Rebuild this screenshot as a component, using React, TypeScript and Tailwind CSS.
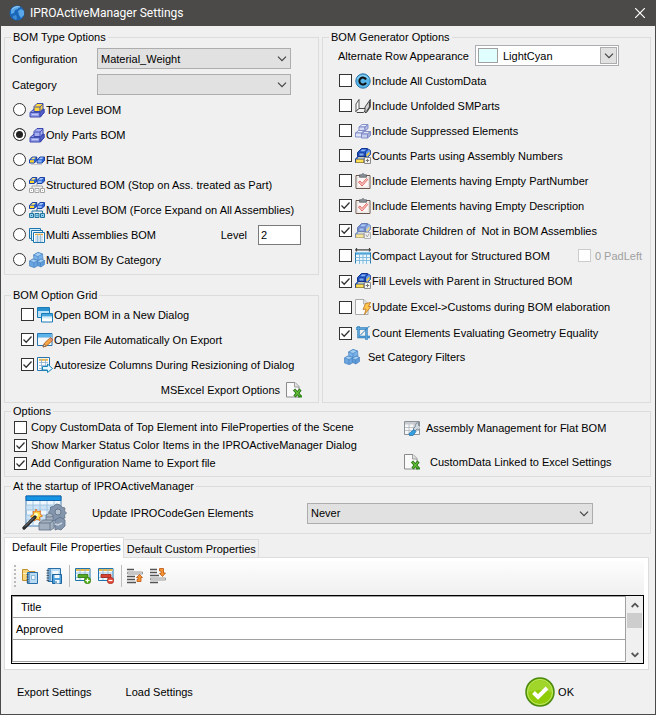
import React, { useState } from 'react';

interface IconProps {
  className?: string;
}

const Svg: React.FC<{ children: React.ReactNode; className?: string }> = ({ children, className = 'size-4' }) => (
  <svg viewBox="0 0 16 16" className={`shrink-0 ${className}`} aria-hidden="true">
    {children}
  </svg>
);

const Block: React.FC<{ x: number; y: number; w?: number; h?: number; top: string; front: string; side: string; line: string }> = ({
  x, y, w = 6, h = 3, top, front, side, line,
}) => (
  <g stroke={line} strokeWidth="0.9" strokeLinejoin="round">
    <path d={`M${x} ${y}l3 -2.5h${w}l-3 2.5z`} fill={top} />
    <path d={`M${x} ${y}h${w}v${h}h-${w}z`} fill={front} />
    <path d={`M${x + w} ${y}l3 -2.5v${h}l-3 2.5z`} fill={side} />
  </g>
);

const PartsIcon: React.FC<{ cap: string }> = ({ cap }) => (
  <Svg>
    <path d="M1 10.500L5 7h10v3.500L11.500 15H1z" fill="#8f9be6" stroke="#3c48ae" strokeLinejoin="round" />
    <path d="M1.500 10.500h9.500v4" fill="none" stroke="#4350b4" />
    <path d="M11 10.500l4-3.500v4l-4 4z" fill="#5262c8" stroke="#3c48ae" strokeLinejoin="round" />
    <path d="M5 4.500L8 1.500h6v5L11.500 9.500H5z" fill={cap} stroke="#3c48ae" strokeLinejoin="round" />
    <path d="M5.500 5h5.500v4M11 5l3-3" fill="none" stroke="#3c48ae" strokeWidth="0.9" />
    <path d="M3 12.500h6" stroke="#c4caf7" strokeWidth="1.200" />
  </Svg>
);

/* Two flat wedges side by side, yellow then blue */
const FlatPair: React.FC<{ y: number }> = ({ y }) => (
  <g strokeLinejoin="round" stroke="#12379c" strokeWidth=".9">
    <path d={`M.5 ${y + 6}v-3l2.700-3h4.600v3.500l-2.500 2.500z`} fill="#2c62d0" />
    <path d={`M1 ${y + 5.500}v-2.300h4v2.300z`} fill="#ffd52e" stroke="none" />
    <path d={`M2 ${y + 2.300}l1.700-1.800h3l-1.500 1.800z`} fill="#ffe978" stroke="none" />
    <path d={`M8.200 ${y + 6}v-3l2.700-3h4.600v3.500l-2.500 2.500z`} fill="#2c62d0" />
    <path d={`M8.700 ${y + 5.500}v-2.300h4v2.300z`} fill="#8bb2f5" stroke="none" />
    <path d={`M9.700 ${y + 2.300}l1.700-1.800h3l-1.500 1.800z`} fill="#a9c8fb" stroke="none" />
  </g>
);

const FlatIcon = () => (
  <Svg>
    <FlatPair y={5} />
    <path d="M2 12.500h11" stroke="#c9c9c9" />
  </Svg>
);

const TreeIcon: React.FC<{ line: string; fill: string }> = ({ line, fill }) => (
  <Svg>
    <FlatPair y={0.5} />
    <path d="M8 7v2M3 11v-2h10.500v2" fill="none" stroke={line} />
    <path d="M.5 11.500h4v4h-4zM6 11.500h4v4h-4zM11.500 11.500h4v4h-4z" fill={fill} stroke={line} />
    <path d="M2.500 13v1M8 13v1M13.500 13v1" stroke={line} />
  </Svg>
);

const SheetsIcon = () => (
  <Svg>
    <path d="M.5 1.500h11v10h-11z" fill="#d7ecf9" stroke="#1d76ad" />
    <path d="M2.500 3.500h11v10h-11z" fill="#e8f4fb" stroke="#1d76ad" />
    <path d="M4.500 5.500h11v10h-11z" fill="#fff" stroke="#1d76ad" />
    <path d="M6 7.500h8" stroke="#e4a83e" strokeWidth="1.500" />
    <path d="M6 10h8M6 12h8M6 14h8M8.500 7v8M11.500 7v8" stroke="#8db5d6" strokeWidth=".8" />
  </Svg>
);

const CubesIcon = () => (
  <Svg>
    <g stroke="#4a84c0" strokeWidth=".7" strokeLinejoin="round">
      <path d="M4.500 3L9 .5l4.500 1.500.5 5L10 9.500 5 8z" fill="#79b3e9" />
      <path d="M.5 9L4 7l5 1.500v5L5.500 15.700.5 14z" fill="#6aa5e0" />
      <path d="M8 9.500L12 7l3.500 1.500v4L12 15l-3.500-1.500z" fill="#5e9bd9" />
      <path d="M4.500 3L9 4.500 13.500 2 9 .5zM.5 9l4.500 1.500L9 8.500 4 7zM8 9.500l3.500 1.200 4-2.200L12 7z" fill="#a5d0f5" />
      <path d="M9 4.500V8.500M5 10.500v5M11.500 10.700V15" fill="none" />
    </g>
  </Svg>
);

const WindowsIcon = () => (
  <Svg>
    <path d="M.5.500h12v10h-12z" fill="#b9e0f7" stroke="#1a7ab5" />
    <path d="M1 1h11v3H1z" fill="#2b91cf" />
    <path d="M4.500 6.500h11v8.500h-11z" fill="#fff" stroke="#1a7ab5" />
    <path d="M5 7h10v2.500H5z" fill="#45a5dc" />
    <path d="M5 10h10v1.500H5z" fill="#d5ecf8" />
  </Svg>
);

const EditWindowIcon = () => (
  <Svg>
    <path d="M.5 1.500h14.500v12H.5z" fill="#f4f8fb" stroke="#2774b0" />
    <path d="M1 2h13.500v3H1z" fill="#5db4ea" />
    <path d="M1 5.500h13.500" stroke="#a6cde6" />
    <path d="M6 15l1.500-4L13.500 5.500l2.500 2.500L9.500 14z" fill="#f5a545" stroke="#a55b1f" strokeWidth=".8" />
    <path d="M6 15l1.200-3 2 2z" fill="#f7dfb8" stroke="#6b4226" strokeWidth=".6" />
    <path d="M12.800 6.200l2.500 2.500" stroke="#d98080" strokeWidth="1.400" />
  </Svg>
);

const ResizeIcon = () => (
  <Svg>
    <path d="M.5.500h12v13H.5z" fill="#fff" stroke="#2774b0" />
    <path d="M2 2.800h9" stroke="#efb949" strokeWidth="2" />
    <path d="M2 5.500h9M2 8.500h9M2 11.500h9M4.500 2v11M8.500 2v11" stroke="#86add0" strokeWidth=".8" />
    <path d="M5.500 9.500h5v-2.500l5 4.500-5 4v-2.500h-5z" fill="#e6f7ff" stroke="#1986b8" strokeLinejoin="round" />
  </Svg>
);

const ExcelIcon = () => (
  <Svg>
    <path d="M.5.500h8.500l4 4v10.500H.5z" fill="#fafafa" stroke="#8b8b8b" />
    <path d="M8.500.500v4.500h4.500" fill="#e1e1e1" stroke="#8b8b8b" strokeWidth=".8" />
    <path d="M8 7.500l6.500 7M14.500 7.500l-6 7" stroke="#22700f" strokeWidth="3" />
    <path d="M8.500 8l5.500 6M14 8l-5 6" stroke="#65be3a" strokeWidth="1.300" />
    <path d="M12 14.500h4" stroke="#328a1d" strokeWidth="2" />
  </Svg>
);

const CustomDataIcon = () => (
  <Svg>
    <circle cx="8" cy="8" r="7.200" fill="#57b4e8" stroke="#2a75a8" />
    <path d="M2.500 6a6 5.500 0 0 1 11 0" fill="none" stroke="#a4dcf9" />
    <path d="M11 6.500a3.500 3.500 0 1 0 0 3.200" fill="none" stroke="#111" strokeWidth="2" />
  </Svg>
);

/* Bent sheet metal profile: two upright flanges joined by a base */
const UnfoldIcon = () => (
  <Svg>
    <path d="M1 13.500V6l3-4.500v9z" fill="#fff" stroke="#444" strokeWidth=".9" strokeLinejoin="round" />
    <path d="M1 13.500l3-3h8l-3.500 4H2z" fill="#f4f4f4" stroke="#333" strokeWidth=".9" strokeLinejoin="round" />
    <path d="M10 14.500V9L15.300 1.500V9l-3.800 5.500z" fill="#d2d2d2" stroke="#333" strokeWidth=".9" strokeLinejoin="round" />
    <path d="M14.500 3.500v5.500l-3 4.500" fill="none" stroke="#444" strokeWidth="1.200" />
  </Svg>
);

const SuppressedIcon = () => (
  <Svg>
    <Block x={4} y={4} w={6} h={4} top="#edf0fc" front="#d6dcf5" side="#b7bfe6" line="#7a87c4" />
    <Block x={0.5} y={10} w={6} h={4} top="#edf0fc" front="#dfe4fa" side="#b7bfe6" line="#7a87c4" />
    <Block x={6.500} y={11} w={6} h={4} top="#dfe4f5" front="#c8d0ee" side="#a4afd8" line="#7a87c4" />
  </Svg>
);

const CountIcon: React.FC<{ badge: string; faded?: boolean }> = ({ badge, faded }) => (
  <Svg className={faded ? 'size-4 opacity-60' : 'size-4'}>
    <path d="M2.500 8.500v-4L6.500.500h6v5l-2 3z" fill="#1f55c4" stroke="#12328f" strokeLinejoin="round" />
    <path d="M4 5h5v3H4z" fill="#7ba8f2" stroke="#12328f" strokeWidth=".7" />
    <path d="M7 1.500h4l-1.500 1.700h-4z" fill="#8db6f8" />
    <path d="M10.500 4l3-3 2 1.500v4l-3 3-2-1z" fill="#5f95ee" stroke="#12328f" strokeWidth=".8" />
    <path d="M11.500 6.500l3-3v2.500l-3 3z" fill="#f6cd35" />
    <path d="M.5 14.500V11L3 8.500h8v4l-2 2z" fill="#2c62d0" stroke="#12328f" strokeLinejoin="round" />
    <path d="M1 11.500h7.500v3H1z" fill="#ffe25a" stroke="#b98f10" strokeWidth=".5" />
    <path d="M3.500 9.200h6l-1.200 1.300H2.500z" fill="#fff0a0" />
    <path d="M9.500 9.500h6v6h-6z" fill="#f4f4f4" stroke="#8b8b8b" />
    <path d={badge} fill="none" stroke="#777" strokeWidth="1" />
  </Svg>
);

const PLUS_BADGE = 'M12.500 10.800v3.400M10.800 12.500h3.400';
const CHECK_BADGE = 'M10.800 11.500l1.500 2.500 2-3.500';

const ClipboardIcon = () => (
  <Svg>
    <path d="M1 2.500h14v13H1z" fill="#fff" stroke="#69574e" strokeLinejoin="round" />
    <path d="M2.300 4h11.400v10.200H2.300z" fill="#fdf6f5" stroke="#d9d0ca" strokeWidth=".6" />
    <path d="M4.500 1.800h2L8 .3l1.500 1.500h2v2.400h-7z" fill="#8b9096" stroke="#555c63" strokeWidth=".7" />
    <path d="M3.500 9l1.500-1 2 2.500 4.500-5 1.200 1L7 13z" fill="#fbd8d6" stroke="#dd554f" strokeWidth=".9" />
  </Svg>
);

const CompactIcon = () => (
  <Svg>
    <path d="M.5 3.500h15v12H.5z" fill="#eaf6fc" />
    <path d="M0 1.800h16M1.500 0v3.500M14.500 0v3.500" stroke="#454545" strokeWidth="1.200" />
    <path d="M.5 5.500h15" stroke="#4aa4d8" strokeWidth="2.200" />
    <path d="M.5 4.500v11M15.500 4.500v11" stroke="#2778ad" />
    <path d="M.5 9.500h15M.5 12.500h15M4.500 5v11M8 5v11M11.500 5v11" stroke="#6fb0d6" strokeWidth=".8" />
  </Svg>
);

const UpdateIcon = () => (
  <Svg>
    <path d="M.5.500h8.500l4 4v11H.5z" fill="#fafafa" stroke="#aaa" />
    <path d="M8.500.500v4.500h4.500" fill="#e1e1e1" stroke="#aaa" strokeWidth=".8" />
    <path d="M10.500 4.500l5-1-2 4h2.500l-6.500 8 1.500-5.500-3 .5z" fill="#ffc54d" stroke="#b9741f" strokeWidth=".8" />
  </Svg>
);

const CropIcon = () => (
  <Svg>
    <path d="M3.500 1v11h11.500M1 3.500h10.500V15" fill="none" stroke="#2f7fbd" strokeWidth="2.400" />
    <path d="M3.500 1v11h11.500M1 3.500h10.500V15" fill="none" stroke="#5ba5da" strokeWidth="1" />
    <path d="M5 10.500L14.500 1" stroke="#2f7fbd" />
  </Svg>
);

const GridWrenchIcon = () => (
  <Svg>
    <path d="M.5 1.500h15v13H.5z" fill="#f7f7f7" stroke="#8c9299" />
    <path d="M1 2h14v2.500H1z" fill="#c8ccd1" />
    <path d="M1 7.500h14M1 10.500h14M5 4v10M10 4v10" stroke="#b7bdc4" strokeWidth=".9" />
    <path d="M11.500 5a3 3 0 0 1 3-2.500v3l2 1v2a3 3 0 0 1-3.500.5l-2 2-2-2 2-2z" fill="#d2dae1" stroke="#6c7985" strokeWidth=".8" />
    <path d="M5 13.500l5-4 2 2-3 4H5.500z" fill="#34a0df" stroke="#1b6ea6" strokeWidth=".7" />
  </Svg>
);

const WizardIcon: React.FC<IconProps> = ({ className }) => (
  <svg viewBox="0 0 46 36" className={`shrink-0 ${className}`} aria-hidden="true">
    <path d="M4 1h35v30H4z" fill="#edf7fd" stroke="#4a83b4" />
    <path d="M4 1h35v4.500H4z" fill="#1695e6" stroke="#1269ae" />
    <path d="M4.500 10h34v5h-34zM4.500 20h34v5h-34z" fill="#c9e2f5" />
    <path d="M4 10h35M4 15h35M4 20h35M4 25h35M11 6v25M18 6v25M25 6v25M32 6v25" stroke="#98bfdd" strokeWidth=".8" />
    <g fill="#8396ad" stroke="#5f7085" strokeWidth=".8">
      <path d="M35 9l3 1 1.500 2 3.500 1-.5 3 2 2-2 2 .5 3-3.500 1-2 2-3-1-3 1-2-2-2-1V19l-1-2 2-2v-3l3-.5 2-2z" />
      <path d="M33 25l5-3 5 3v6l-4 4-3-1-3 1z" />
      <path d="M24 20l4-2 3 2v6h-7z" fill="#aab5c2" />
      <path d="M17 28l4-3h9l2 3v5l-3 2H17z" fill="#a2afbe" />
      <path d="M17 28h11l3-2M28 28v7M24 22h5l2-1" fill="none" />
    </g>
    <circle cx="36" cy="17" r="3" fill="#b3c1d0" stroke="#5a697b" strokeWidth=".8" />
    <path d="M33 29l3 1 4-2" fill="none" stroke="#c9d2dc" strokeWidth="1.500" />
    <path d="M14 14l1.500 3 3-1-.5 3 2.500 2-3 1 .5 3.500-3-1.500-3 2-.5-3-3-1.500 3-2-.5-3 2.500.5z" fill="#ffe34a" stroke="#e2711d" />
    <circle cx="14" cy="20" r="2" fill="#fffbd0" />
    <path d="M2 33l11-11" stroke="#26282b" strokeWidth="3.200" strokeLinecap="round" />
    <path d="M3 31.500l9-9" stroke="#8d939a" strokeWidth=".9" />
  </svg>
);

const GlobeIcon = () => (
  <Svg>
    <circle cx="8" cy="8" r="7.500" fill="#1a66b8" />
    <path d="M2 5c2-3 5-4.500 8-4l-1 3-3 1-1 3-3 1zM9 6l3-2 3 2v4l-3 3-2-3z" fill="#5aa7e8" />
    <path d="M4 11l3-1 1 3-1 2-3-2z" fill="#3f8cd4" />
    <path d="M3 4.500a6 4 0 0 1 8-2.500" fill="none" stroke="#9fd0f7" />
  </Svg>
);

const NotebookBody: React.FC<{ x: number; y: number }> = ({ x, y }) => (
  <g>
    <path d={`M${x} ${y}h10v11h-10z`} fill="#b9dbf4" stroke="#286fa8" />
    <path d={`M${x + 1.500} ${y}v11`} stroke="#286fa8" strokeWidth="1" />
    <path d={`M${x - 1} ${y + 2}h2M${x - 1} ${y + 4.500}h2M${x - 1} ${y + 7}h2M${x - 1} ${y + 9.500}h2`} stroke="#454f5a" strokeWidth=".9" />
  </g>
);

const OpenBookIcon = () => (
  <Svg>
    <path d="M.5 12.500v-11h5l1.500 2h6v9z" fill="#f9d57a" stroke="#c38f2e" />
    <path d="M1 5.500h12" stroke="#ffefba" />
    <NotebookBody x={5.500} y={4.500} />
    <path d="M9.500 7.500h3.500v4h-3.500z" fill="#f5fbff" stroke="#6ba4cd" strokeWidth=".7" />
  </Svg>
);

const SaveBookIcon = () => (
  <Svg>
    <path d="M2 .5h12.500v13H2z" fill="#b9dbf4" stroke="#286fa8" />
    <path d="M4 1v12" stroke="#286fa8" />
    <path d="M.5 2.500h2.500M.5 5h2.500M.5 7.500h2.500M.5 10h2.500M.5 12.500h2.500" stroke="#454f5a" strokeWidth=".9" />
    <path d="M6.500 3h6v3h-6z" fill="#f2f8fc" />
    <path d="M6.500 6.500h9v9h-9z" fill="#4da0dc" stroke="#1d649f" />
    <path d="M8.500 7h5v3h-5zM9 12h4.500v3.500H9z" fill="#f2f8fc" />
    <path d="M10 13v2" stroke="#1d649f" />
  </Svg>
);

const RowIcon: React.FC<{ add?: boolean }> = ({ add }) => (
  <Svg>
    <path d="M.5.500h14.500v12H.5z" fill="#f2f9fd" stroke="#1e75ad" />
    <path d="M1 2h13.500" stroke="#e8b64e" strokeWidth="2" />
    <path d="M1 5h14M1 9.500h14M5 1v11M10 1v11" stroke="#8ab9d9" strokeWidth=".8" />
    <path d="M3 6.500h10v3H3z" fill={add ? '#57aa24' : '#d84232'} stroke={add ? '#2b730b' : '#9c2118'} strokeWidth=".8" />
    <circle cx="12.500" cy="12.500" r="3.200" fill={add ? '#58b51c' : '#e24a38'} stroke={add ? '#2f790c' : '#a5261b'} strokeWidth=".7" />
    <path d={add ? 'M10.500 12.500h4M12.500 10.500v4' : 'M10.500 12.500h4'} stroke="#fff" strokeWidth="1.200" />
  </Svg>
);

const MoveIcon: React.FC<{ down?: boolean }> = ({ down }) => (
  <Svg>
    {down ? (
      <>
        <path d="M0 1.500h7M0 4.500h7M0 7.500h9M0 14.500h8" stroke="#555" strokeWidth="1.600" />
        <path d="M.5 10h15v2H.5z" fill="#eee" stroke="#888" strokeWidth=".8" />
        <path d="M9.500.500h4v4.500h2L12.500 8.500 9.500 5.500h1.500v-2.500h-1.500z" fill="#f79433" stroke="#ba5510" strokeWidth=".8" />
      </>
    ) : (
      <>
        <path d="M0 1.500h7M0 8.500h8M0 11.500h8M0 14.500h9" stroke="#555" strokeWidth="1.600" />
        <path d="M.5 4h15v2H.5z" fill="#eee" stroke="#888" strokeWidth=".8" />
        <path d="M10 13.500v-2h1v-2H9.500L12.500 6.500l3 3h-1.500v4z" fill="#f79433" stroke="#ba5510" strokeWidth=".8" />
      </>
    )}
  </Svg>
);

const OkIcon = () => (
  <svg viewBox="0 0 30 30" className="size-[30px] shrink-0" aria-hidden="true">
    <circle cx="15" cy="15" r="14" fill="#8fcb06" stroke="#4b8a10" strokeWidth="1.500" />
    <path d="M2.500 16a12.500 12.500 0 0 1 25 0c-7-4-17-4-25 0z" fill="#a6d93a" opacity=".7" />
    <circle cx="15" cy="15" r="12.500" fill="none" stroke="#c2e86f" />
    <path d="M8.500 15.500l4.500 4.500L22 11" fill="none" stroke="#fff" strokeWidth="4" />
  </svg>
);

const Chevron: React.FC<IconProps> = ({ className = '' }) => (
  <svg viewBox="0 0 10 6" className={`pointer-events-none h-1.5 w-2.5 ${className}`} aria-hidden="true">
    <path d="M1 .7l4 4 4-4" fill="none" stroke="#444" strokeWidth="1.200" />
  </svg>
);

const Dropdown: React.FC<{ id: string; options: string[]; className?: string }> = ({ id, options, className = '' }) => (
  <div className={`relative ${className}`}>
    <select id={id} className="block h-[21px] w-full appearance-none border border-[#adadad] bg-[#e1e1e1] pl-[3px] outline-none">
      {options.map(option => <option key={option}>{option}</option>)}
    </select>
    <Chevron className="absolute right-1 top-2" />
  </div>
);

const Group: React.FC<{ title: string; className?: string; children: React.ReactNode }> = ({ title, className = '', children }) => (
  <fieldset className={`min-w-0 border border-[#dcdcdc] ${className}`}>
    <legend className="ml-1.5 px-0.5 leading-[14px]">{title}</legend>
    {children}
  </fieldset>
);

interface CheckProps {
  label: string;
  icon?: React.ReactNode;
  checked?: boolean;
  disabled?: boolean;
  className?: string;
  textClass?: string;
}

const Check: React.FC<CheckProps> = ({ label, icon, checked, disabled, className = 'h-[25px]', textClass = '' }) => (
  <label className={`flex items-center whitespace-nowrap ${className}`}>
    <span className="grid shrink-0 place-items-center">
      <input
        type="checkbox"
        defaultChecked={checked}
        disabled={disabled}
        className="peer col-start-1 row-start-1 size-[13px] appearance-none border border-[#333] bg-white disabled:border-[#ccc]"
      />
      <svg viewBox="0 0 13 13" className="pointer-events-none invisible col-start-1 row-start-1 size-[13px] peer-checked:visible" aria-hidden="true">
        <path d="M2.500 6.500l2.700 2.700 5.300-5.700" fill="none" stroke="#333" strokeWidth="1.300" />
      </svg>
    </span>
    {icon && <span className="ml-[3px]">{icon}</span>}
    <span className={`${icon ? 'ml-px' : 'ml-1'} ${textClass}`}>{label}</span>
  </label>
);

const bomTypes = [
  { label: 'Top Level BOM', icon: <PartsIcon cap="#ffd83b" /> },
  { label: 'Only Parts BOM', icon: <PartsIcon cap="#a5aef0" /> },
  { label: 'Flat BOM', icon: <FlatIcon /> },
  { label: 'Structured BOM (Stop on Ass. treated as Part)', icon: <TreeIcon line="#a6a6a6" fill="#fff" /> },
  { label: 'Multi Level BOM (Force Expand on All Assemblies)', icon: <TreeIcon line="#23759f" fill="#8fd0ee" /> },
  { label: 'Multi Assemblies BOM', icon: <SheetsIcon /> },
  { label: 'Multi BOM By Category', icon: <CubesIcon /> },
];

const generatorOptions: CheckProps[] = [
  { label: 'Include All CustomData', icon: <CustomDataIcon /> },
  { label: 'Include Unfolded SMParts', icon: <UnfoldIcon /> },
  { label: 'Include Suppressed Elements', icon: <SuppressedIcon /> },
  { label: 'Counts Parts using Assembly Numbers', icon: <CountIcon badge={PLUS_BADGE} /> },
  { label: 'Include Elements having Empty PartNumber', icon: <ClipboardIcon /> },
  { label: 'Include Elements having Empty Description', icon: <ClipboardIcon />, checked: true },
  { label: 'Elaborate Children of \u00a0Not in BOM Assemblies', icon: <CountIcon badge={CHECK_BADGE} faded />, checked: true },
];

const toolButton = 'flex size-[22px] items-center justify-center';

const App: React.FC = () => {
  const [bomType, setBomType] = useState('Only Parts BOM');
  const [tab, setTab] = useState(0);

  return (
    <div className="flex min-h-screen flex-col border border-t-0 border-[#4b4a48] bg-[#f0f0f0] font-['Liberation_Sans',sans-serif] text-[11px] leading-4 text-black">
      <header className="flex h-[26px] items-center bg-[#4b4a48] pl-2 pr-2.5 font-['Roboto',sans-serif] text-xs text-white">
        <GlobeIcon />
        <h1 className="ml-[5px] flex-1">IPROActiveManager Settings</h1>
        <button type="button" aria-label="Close">
          <svg viewBox="0 0 10 10" className="size-2.5"><path d="M0 0l10 10M10 0L0 10" stroke="#fff" strokeWidth="1.200" /></svg>
        </button>
      </header>

      <main className="flex flex-1 flex-col pl-[3px] pr-1 pt-1">
        <div className="grid grid-cols-[minmax(0,315fr)_minmax(0,329fr)] gap-[3px]">
          <div className="flex flex-col gap-[13px]">
            <Group title="BOM Type Options" className="pb-0.5">
              <div className="flex flex-col gap-[5px] pl-[7px] pr-[27px] pt-1">
                <div className="flex items-center">
                  <label htmlFor="configuration" className="w-[85px]">Configuration</label>
                  <Dropdown id="configuration" options={['Material_Weight']} className="flex-1" />
                </div>
                <div className="flex items-center">
                  <label htmlFor="category" className="w-[85px]">Category</label>
                  <Dropdown id="category" options={['']} className="flex-1" />
                </div>
              </div>
              <div className="pl-2 pt-0.5">
                {bomTypes.map(type => (
                  <div key={type.label} className="flex h-[25px] items-center">
                    <label className="flex items-center whitespace-nowrap">
                      <input
                        type="radio"
                        name="bomType"
                        checked={bomType === type.label}
                        onChange={() => setBomType(type.label)}
                        className="size-[13px] appearance-none rounded-full border border-[#333] bg-white checked:bg-[#222] checked:shadow-[inset_0_0_0_2px_#fff]"
                      />
                      <span className="ml-[3px]">{type.icon}</span>
                      <span className="ml-px">{type.label}</span>
                    </label>
                    {type.label === 'Multi Assemblies BOM' && (
                      <div className="ml-auto mr-[17px] flex items-center gap-[11px]">
                        <label htmlFor="level">Level</label>
                        <input id="level" defaultValue="2" className="h-5 w-[43px] border border-[#7a7a7a] bg-white px-0.5 outline-none" />
                      </div>
                    )}
                  </div>
                ))}
              </div>
            </Group>

            <Group title="BOM Option Grid">
              <div className="pl-4">
                <Check label="Open BOM in a New Dialog" icon={<WindowsIcon />} />
                <Check label="Open File Automatically On Export" icon={<EditWindowIcon />} checked />
                <Check label="Autoresize Columns During Resizioning of Dialog" icon={<ResizeIcon />} checked />
              </div>
              <div className="flex h-[25px] justify-end pr-4">
                <button type="button" className="flex items-center gap-1.5">MSExcel Export Options<ExcelIcon /></button>
              </div>
            </Group>
          </div>

          <Group title="BOM Generator Options">
            <div className="flex items-center pl-[15px] pt-px">
              <label htmlFor="rowColor" className="w-[137px] whitespace-nowrap">Alternate Row Appearance</label>
              <div className="relative w-36">
                <select id="rowColor" className="block h-[21px] w-full appearance-none border border-[#abadb3] bg-white pl-[27px] outline-none">
                  <option>LightCyan</option>
                </select>
                <span className="pointer-events-none absolute left-[3px] top-[3px] h-[15px] w-5 border border-[#a0a0a0] bg-[#e0ffff]" />
                <span className="pointer-events-none absolute right-0.5 top-0.5 flex h-[17px] w-[17px] items-center justify-center border border-[#adadad] bg-[#e1e1e1]">
                  <Chevron />
                </span>
              </div>
            </div>
            <div className="pl-4 pt-0.5">
              {generatorOptions.map(option => <Check key={option.label} {...option} />)}
              <div className="flex justify-between pr-2">
                <Check label="Compact Layout for Structured BOM" icon={<CompactIcon />} />
                <Check label="0 PadLeft" disabled textClass="text-[#a0a0a0]" />
              </div>
              <Check label="Fill Levels with Parent in Structured BOM" icon={<CountIcon badge={PLUS_BADGE} />} checked className="h-[26px]" />
              <Check label="Update Excel->Customs during BOM elaboration" icon={<UpdateIcon />} className="h-[26px]" />
              <Check label="Count Elements Evaluating Geometry Equality" icon={<CropIcon />} checked className="h-[26px]" />
              <button type="button" className="ml-[5px] flex h-[22px] items-center gap-2"><CubesIcon />Set Category Filters</button>
            </div>
          </Group>
        </div>

        <Group title="Options" className="mt-px pb-1">
          <div className="flex justify-between pl-[9px] pr-[37px]">
            <div>
              <Check label="Copy CustomData of Top Element into FileProperties of the Scene" className="h-[18px]" />
              <Check label="Show Marker Status Color Items in the IPROActiveManager Dialog" checked className="h-[18px]" />
              <Check label="Add Configuration Name to Export file" checked className="h-[18px]" />
            </div>
            <div className="flex w-[209px] flex-col justify-between py-0.5">
              <button type="button" className="flex items-center gap-1.5 whitespace-nowrap"><GridWrenchIcon />Assembly Management for Flat BOM</button>
              <button type="button" className="flex items-center gap-2.5 whitespace-nowrap"><ExcelIcon />CustomData Linked to Excel Settings</button>
            </div>
          </div>
        </Group>

        <Group title="At the startup of IPROActiveManager" className="mt-0.5">
          <div className="flex h-10 items-center pl-[17px] pr-[57px]">
            <WizardIcon className="h-9 w-[46px]" />
            <label htmlFor="startup" className="ml-6 w-[215px]">Update IPROCodeGen Elements</label>
            <Dropdown id="startup" options={['Never', 'Always']} className="flex-1" />
          </div>
        </Group>

        <div role="tablist" className="relative mt-[3px] flex items-end">
          {['Default File Properties', 'Default Custom Properties'].map((name, idx) => (
            <button
              key={name}
              type="button"
              role="tab"
              aria-selected={tab === idx}
              onClick={() => setTab(idx)}
              className={
                tab === idx
                  ? '-mb-px h-[21px] border border-b-0 border-[#dcdcdc] bg-white pb-0.5 pl-[7px] pr-0.5'
                  : 'h-[18px] border border-b-0 border-[#dcdcdc] border-l-transparent bg-[#f0f0f0] px-0.5'
              }
            >
              {name}
            </button>
          ))}
        </div>
        <section className="mr-0.5 border border-[#dcdcdc] bg-white pb-[5px] pl-1.5 pr-1 pt-[3px]">
          <div className="flex h-[34px] items-center bg-linear-to-b from-[#fdfdfd] to-[#f0f0f0] pb-1 pl-[3px]">
            <span className="mr-[3px] h-[22px] border-l-2 border-dotted border-[#bbb]" />
            <button type="button" aria-label="Open template" className={toolButton}><OpenBookIcon /></button>
            <button type="button" aria-label="Save template" className={`ml-0.5 ${toolButton}`}><SaveBookIcon /></button>
            <span className="ml-1 mr-0.5 h-[22px] w-px bg-[#bdbdbd]" />
            <button type="button" aria-label="Add row" className={toolButton}><RowIcon add /></button>
            <button type="button" aria-label="Remove row" className={`ml-px ${toolButton}`}><RowIcon /></button>
            <span className="ml-1 mr-0.5 h-[22px] w-px bg-[#bdbdbd]" />
            <button type="button" aria-label="Move up" className={toolButton}><MoveIcon /></button>
            <button type="button" aria-label="Move down" className={`ml-px ${toolButton}`}><MoveIcon down /></button>
          </div>
          <div className="flex border border-black bg-white">
            <table className="mb-px flex-1 border-collapse border border-[#a0a0a0] text-left">
              <thead>
                <tr className="h-[21px] border-b border-[#a0a0a0]"><th className="pl-2 font-normal">Title</th></tr>
              </thead>
              <tbody>
                <tr className="h-[22px] border-b border-[#a0a0a0]"><td className="pl-[3px]">Approved</td></tr>
                <tr className="h-[22px] border-b border-[#a0a0a0]"><td /></tr>
              </tbody>
            </table>
            <div className="flex w-[17px] flex-col items-center bg-[#f0f0f0]">
              <button type="button" aria-label="Scroll up" className="flex h-[17px] items-center">
                <svg viewBox="0 0 8 6" className="h-1.5 w-2"><path d="M.7 5L4 1.700 7.300 5" fill="none" stroke="#555" strokeWidth="1.800" /></svg>
              </button>
              <span className="h-[15px] w-[15px] bg-[#cdcdcd]" />
              <button type="button" aria-label="Scroll down" className="mt-auto flex h-[17px] items-center">
                <svg viewBox="0 0 8 6" className="h-1.5 w-2"><path d="M.7 1L4 4.300 7.300 1" fill="none" stroke="#555" strokeWidth="1.800" /></svg>
              </button>
            </div>
          </div>
        </section>

        <footer className="flex flex-1 items-center pl-[13px] pr-[77px]">
          <button type="button">Export Settings</button>
          <button type="button" className="ml-[34px]">Load Settings</button>
          <button type="button" className="ml-auto flex items-center gap-[3px]"><OkIcon />OK</button>
        </footer>
      </main>
    </div>
  );
};

export default App;
